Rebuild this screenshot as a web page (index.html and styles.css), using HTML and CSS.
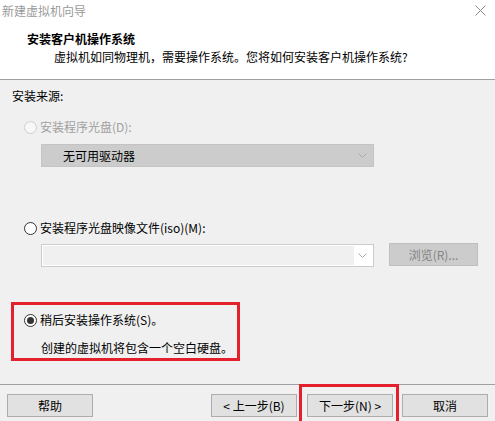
FILE: index.html
```html
<!DOCTYPE html>
<html lang="zh-CN">
<head>
  <meta charset="UTF-8">
  <meta name="viewport" content="width=device-width, initial-scale=1.0">
  <title>新建虚拟机向导</title>
  <link rel="stylesheet" href="styles.css">
</head>
<body>
  <div class="window">
    <!-- Title bar + header -->
    <div class="top">
      <div class="titlebar">
        <span class="title-text">新建虚拟机向导</span>
        <svg class="close" width="11" height="11" viewBox="0 0 11 11">
          <path d="M0.5 0.5 L10.5 10.5 M10.5 0.5 L0.5 10.5" stroke="#8c8c8c" stroke-width="1" fill="none"/>
        </svg>
      </div>
      <div class="header">
        <div class="header-title">安装客户机操作系统</div>
        <div class="header-sub">虚拟机如同物理机，需要操作系统。您将如何安装客户机操作系统?</div>
      </div>
    </div>

    <!-- Main options -->
    <div class="main">
      <div class="source-label">安装来源:</div>

      <div class="option disabled first">
        <span class="radio"></span>
        <span class="option-text">安装程序光盘(D):</span>
      </div>
      <div class="combo combo-disabled">
        <span class="combo-text">无可用驱动器</span>
        <svg class="chevron" width="9" height="5" viewBox="0 0 9 5">
          <polyline points="0.5,0.5 4.5,4.5 8.5,0.5" stroke="#a8a8a8" fill="none"/>
        </svg>
      </div>

      <div class="option second">
        <span class="radio"></span>
        <span class="option-text">安装程序光盘映像文件(iso)(M):</span>
      </div>
      <div class="iso-row">
        <div class="combo combo-edit">
          <span class="edit-field"></span>
          <svg class="chevron" width="9" height="5" viewBox="0 0 9 5">
            <polyline points="0.5,0.5 4.5,4.5 8.5,0.5" stroke="#a8a8a8" fill="none"/>
          </svg>
        </div>
        <button type="button" class="browse-btn" disabled>浏览(R)...</button>
      </div>

      <div class="option third">
        <span class="radio checked"></span>
        <span class="option-text">稍后安装操作系统(S)。</span>
      </div>
      <div class="note">创建的虚拟机将包含一个空白硬盘。</div>
    </div>

    <!-- Footer buttons -->
    <div class="footer">
      <button type="button" class="btn">帮助</button>
      <div class="btn-group">
        <button type="button" class="btn">&lt; 上一步(B)</button>
        <button type="button" class="btn btn-next">下一步(N) &gt;</button>
        <button type="button" class="btn btn-cancel">取消</button>
      </div>
    </div>

    <!-- Red annotation boxes -->
    <div class="mark mark-later"></div>
    <div class="mark mark-next"></div>
  </div>
</body>
</html>
```

FILE: styles.css
```css
/* Global Styles */
* {
  margin: 0;
  padding: 0;
  box-sizing: border-box;
}

body {
  font-family: "Noto Sans CJK SC", "DejaVu Sans", sans-serif;
  font-size: 12px;
  line-height: 16px;
  color: #000;
  background-color: #f0f0f0;
  overflow: hidden;
}

.window {
  position: relative;
  width: 495px;
  height: 421px;
  background-color: #f0f0f0;
}

/* Title bar and header */
.top {
  background-color: #fff;
  border-bottom: 1px solid #a0a0a0;
  height: 80px;
}

.titlebar {
  display: flex;
  justify-content: space-between;
  align-items: center;
  height: 21px;
  padding: 0 9px 0 2px;
}

.title-text {
  color: #9a9a9a;
}

.header {
  padding: 10px 0 0 27px;
}

.header-title {
  font-weight: bold;
}

.header-sub {
  margin-top: 2px;
  padding-left: 27px;
}

/* Main area */
.main {
  height: 304px;
  padding-left: 12px;
}

.source-label {
  padding-top: 8px;
}

.option {
  display: flex;
  align-items: center;
  padding-left: 12px;
  height: 16px;
}

.option.first {
  margin-top: 15px;
}

.option.second {
  margin-top: 53px;
}

.option.third {
  margin-top: 45px;
}

.option.disabled .option-text {
  color: #a0a0a0;
}

.radio {
  position: relative;
  width: 13px;
  height: 13px;
  border: 1px solid #333;
  border-radius: 50%;
  background-color: #fff;
  margin-right: 3px;
}

.option.disabled .radio {
  border-color: #cfcfcf;
  background-color: #f7f7f7;
}

.radio.checked::after {
  content: "";
  position: absolute;
  top: 2px;
  left: 2px;
  width: 7px;
  height: 7px;
  border-radius: 50%;
  background-color: #333;
}

.combo {
  display: flex;
  align-items: center;
  justify-content: space-between;
  width: 333px;
  height: 23px;
  margin-left: 29px;
}

.combo-disabled {
  margin-top: 9px;
  background-color: #cccccc;
  border: 1px solid #c4c4c4;
  padding: 0 6px 0 21px;
}

.iso-row {
  display: flex;
  margin-top: 8px;
}

.combo-edit {
  background-color: #fff;
  border: 1px solid #cccccc;
  padding: 1px 6px 1px 1px;
}

.edit-field {
  width: 311px;
  height: 100%;
  background-color: #f0f0f0;
}

.browse-btn {
  font-family: inherit;
  font-size: 12px;
  width: 89px;
  height: 23px;
  margin-left: 15px;
  margin-top: -1px;
  background-color: #cccccc;
  border: 1px solid #bfbfbf;
  color: #838383;
}

.note {
  margin-top: 12px;
  padding-left: 29px;
}

/* Footer */
.footer {
  display: flex;
  justify-content: space-between;
  border-top: 1px solid #a0a0a0;
  padding: 9px 7px 0 7px;
}

.btn-group {
  display: flex;
  gap: 10px;
}

.btn {
  font-family: inherit;
  font-size: 12px;
  width: 86px;
  height: 23px;
  background-color: #e1e1e1;
  border: 1px solid #adadad;
  color: #000;
}

.btn-cancel {
  margin-left: -1px;
}

/* Red annotation boxes */
.mark {
  position: absolute;
  border: 3px solid #e3202c;
}

.mark-later {
  left: 11px;
  top: 302px;
  width: 229px;
  height: 59px;
}

.mark-next {
  left: 299px;
  top: 384px;
  width: 100px;
  height: 45px;
}
```
